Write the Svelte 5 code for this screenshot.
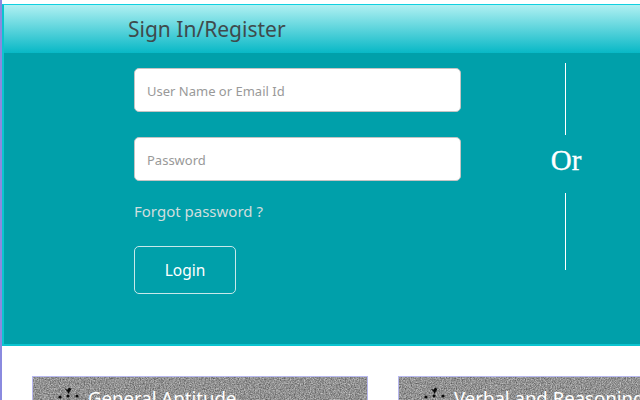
<script lang="ts">
	const cards = [
		{ title: 'General Aptitude' },
		{ title: 'Verbal and Reasoning' }
	];
</script>

<div class="page">
	<section class="login">
		<h2 class="heading">Sign In/Register</h2>
		<div class="body">
			<form class="form" on:submit|preventDefault>
				<input class="field" type="text" placeholder="User Name or Email Id" />
				<input class="field" type="password" placeholder="Password" />
				<a class="forgot" href="#forgot">Forgot password ?</a>
				<button class="btn" type="submit">Login</button>
			</form>
			<div class="or">
				<span class="rule"></span>
				<span class="or-text">Or</span>
				<span class="rule long"></span>
			</div>
		</div>
	</section>

	<section class="cards">
		{#each cards as card, i}
			<article class="card">
				<!-- speckled grey backdrop of the card -->
				<svg class="grain" width="100%" height="100%" aria-hidden="true">
					<filter id="grain-{i}" x="0" y="0" width="100%" height="100%" color-interpolation-filters="sRGB">
						<feTurbulence type="fractalNoise" baseFrequency="0.8" numOctaves="2" seed={i + 3} />
						<feColorMatrix
							type="matrix"
							values="0.6 0 0 0 0.27  0.6 0 0 0 0.27  0.6 0 0 0 0.27  0 0 0 0 1"
						/>
					</filter>
					<rect width="100%" height="100%" filter="url(#grain-{i})" />
				</svg>
				<svg class="icon" viewBox="0 0 26 26" width="26" height="26" aria-hidden="true">
					<path d="M9.500 3.500l3 1.200L14 2.500l2.500 1.500-1.500 2.200-1.500 2.800-1.200-2.500z" fill="#0a0a0a" />
					<circle cx="13" cy="11" r="1.500" fill="#0a0a0a" />
					<circle cx="5" cy="12" r="1.600" fill="#0a0a0a" />
					<circle cx="22" cy="11" r="1.600" fill="#0a0a0a" />
					<circle cx="13" cy="17" r="1.800" fill="#0a0a0a" />
				</svg>
				<span class="card-title">{card.title}</span>
			</article>
		{/each}
	</section>
</div>

<style>
	:global(body) {
		margin: 0;
		background: #fff;
		overflow: hidden;
	}
	.page {
		width: 640px;
		height: 400px;
		box-sizing: border-box;
		padding-top: 4px;
		border-left: 2px solid #8a8adf;
		overflow: hidden;
		font-family: "Noto Sans", "DejaVu Sans", sans-serif;
	}
	.login {
		width: 720px;
		box-sizing: border-box;
		border-top: 1px solid #0fd0e0;
		border-bottom: 2px solid #0cc4d0;
		border-left: 2px solid #0cc4d0;
		background: #00a0aa;
	}
	.heading {
		margin: 0;
		height: 48px;
		box-sizing: border-box;
		padding: 10px 0 0 124px;
		font-size: 21px;
		line-height: 28px;
		font-weight: 400;
		color: #3f4a4c;
		background: linear-gradient(#b0f0f2, #08b8c6);
	}
	.body {
		display: flex;
		height: 291px;
		box-sizing: border-box;
		padding: 10px 0 0 130px;
	}
	.form {
		display: flex;
		flex-direction: column;
		align-items: flex-start;
		width: 327px;
		padding-top: 5px;
	}
	.field {
		width: 327px;
		height: 44px;
		box-sizing: border-box;
		margin-bottom: 25px;
		padding: 2px 12px 0;
		border: 1px solid #c4c4c4;
		border-radius: 5px;
		background: #fff;
		font: 13px "Noto Sans", "DejaVu Sans", sans-serif;
	}
	.field::placeholder {
		color: #999;
		opacity: 1;
	}
	.forgot {
		margin-top: -6px;
		font-size: 15px;
		line-height: 22px;
		color: #d0dede;
		text-decoration: none;
	}
	.btn {
		width: 102px;
		height: 48px;
		margin-top: 24px;
		padding-bottom: 2px;
		border: 1px solid #c8e8ea;
		border-radius: 5px;
		background: transparent;
		color: #fff;
		font: 15.500px "Noto Sans", "DejaVu Sans", sans-serif;
	}
	.or {
		display: flex;
		flex-direction: column;
		align-items: center;
		width: 60px;
		margin-left: 74px;
	}
	.rule {
		width: 1px;
		height: 72px;
		flex: none;
		background: #fff;
	}
	.rule.long {
		height: 77px;
	}
	.or-text {
		height: 58px;
		padding-left: 2px;
		font: 29px/50px "Liberation Serif", serif;
		color: #fff;
		-webkit-text-stroke: 0.3px #fff;
	}
	.cards {
		display: flex;
		gap: 30px;
		width: 720px;
		padding: 30px 0 0 30px;
	}
	.card {
		position: relative;
		display: flex;
		align-items: flex-start;
		gap: 7px;
		width: 336px;
		height: 60px;
		flex: none;
		padding: 7px 0 0 22px;
		box-sizing: border-box;
		border: 1px solid #b8b8f0;
		background: #8c8c8c;
		color: #fff;
	}
	.grain {
		position: absolute;
		inset: 0;
	}
	.icon,
	.card-title {
		position: relative;
	}
	.icon {
		flex: none;
		margin-top: 1px;
	}
	.card-title {
		margin-top: 1px;
		font-size: 18.600px;
		line-height: 26px;
	}
</style>
